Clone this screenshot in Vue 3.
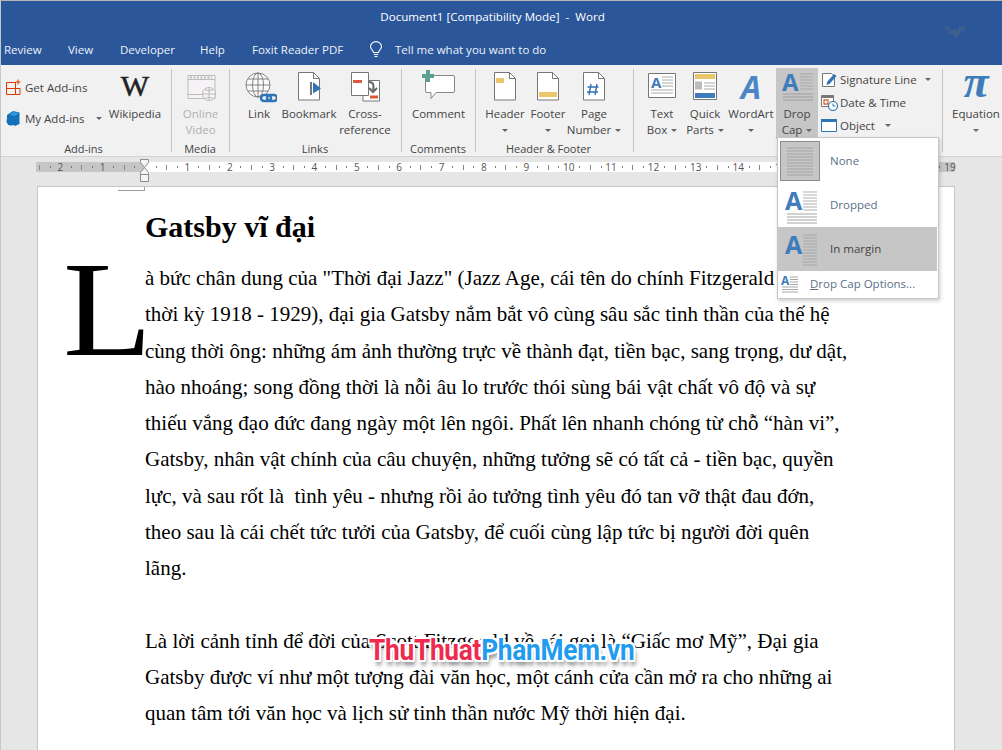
<script setup>
const tabs = [
  { t: 'Review', w: 64 }, { t: 'View', w: 52 }, { t: 'Developer', w: 80 },
  { t: 'Help', w: 52 }, { t: 'Foxit Reader PDF', w: 117 }
]
const rulerNums = []
for (let i = -2; i <= 19; i++) {
  if (i !== 0) rulerNums.push({ n: Math.abs(i), x: 145 + i * 42.37 })
}
const rulerMarks = []
for (let i = -3; i <= 19; i++) {
  const b = 145 + i * 42.37
  if (b + 10 > 36 && b + 10 < 950) rulerMarks.push({ x: b + 10.6, k: 'dot' })
  if (b + 21 > 36 && b + 21 < 950) rulerMarks.push({ x: b + 21.2, k: 'tick' })
  if (b + 32 > 36 && b + 32 < 950) rulerMarks.push({ x: b + 31.8, k: 'dot' })
}
const lines = [
  'à bức chân dung của "Thời đại Jazz" (Jazz Age, cái tên do chính Fitzgerald đặt cho',
  'thời kỳ 1918 - 1929), đại gia Gatsby nắm bắt vô cùng sâu sắc tinh thần của thế hệ',
  'cùng thời ông: những ám ảnh thường trực về thành đạt, tiền bạc, sang trọng, dư dật,',
  'hào nhoáng; song đồng thời là nỗi âu lo trước thói sùng bái vật chất vô độ và sự',
  'thiếu vắng đạo đức đang ngày một lên ngôi. Phất lên nhanh chóng từ chỗ “hàn vi”,',
  'Gatsby, nhân vật chính của câu chuyện, những tưởng sẽ có tất cả - tiền bạc, quyền',
  'lực, và sau rốt là  tình yêu - nhưng rồi ảo tưởng tình yêu đó tan vỡ thật đau đớn,',
  'theo sau là cái chết tức tưởi của Gatsby, để cuối cùng lập tức bị người đời quên',
  'lãng.',
  '\u00a0',
  'Là lời cảnh tỉnh để đời của Scott Fitzgerald về cái gọi là “Giấc mơ Mỹ”, Đại gia',
  'Gatsby được ví như một tượng đài văn học, một cánh cửa cần mở ra cho những ai',
  'quan tâm tới văn học và lịch sử tinh thần nước Mỹ thời hiện đại.'
]
</script>

<template>
  <div class="app">
    <header class="titlebar">
      <div class="title">Document1 [Compatibility Mode]&nbsp; -&nbsp; Word</div>
      <nav class="tabs">
        <span v-for="t in tabs" :key="t.t" class="tab" :style="{ width: t.w + 'px' }">{{ t.t }}</span>
        <svg class="bulb" width="14" height="17" viewBox="0 0 14 17" fill="none" stroke="#fff" stroke-width="1.1">
          <path d="M4.5 11.5C4 9 1.5 8.5 1.5 5.6a5.5 5 0 0 1 11 0C12.500 8.500 10 9 9.500 11.500Z" />
          <path d="M4.800 13.500h4.400M5.500 15.500h3" />
        </svg>
        <span class="tell">Tell me what you want to do</span>
      </nav>
      <svg class="smudge" width="28" height="24" viewBox="0 0 28 24" fill="#3d5f8f">
        <path d="M2 8l5 1 2 5 3-4 3 3 2-5 5 1 3-4-3 8-4 0-1 5-4 3-2-4-4-1-1-4-3-1Z" />
      </svg>
    </header>

    <section class="ribbon">
      <div class="group g-addins">
        <div class="group-body">
          <div class="addin-col">
            <div class="addin-row">
              <svg width="17" height="17" viewBox="0 0 17 17" fill="none" stroke="#d83b01" stroke-width="1">
                <path d="M1.500 3.500h9v12h-9ZM1.500 9.500h13.500v6h-4.500M10.500 3.500v12" />
                <path d="M13 .5v5M10.500 3h5" />
              </svg>
              <span>Get Add-ins</span>
            </div>
            <div class="addin-row">
              <svg width="17" height="17" viewBox="0 0 17 17">
                <path d="M8 1l6.500 1.500V14L10 16l-3-2V10L2 10 2 5Z" fill="#1570b8" />
                <circle cx="6" cy="11" r="4.500" fill="#1570b8" />
                <path d="M8 2l6 1-4 3-5-1Z" fill="#2e9ae0" />
              </svg>
              <span>My Add-ins</span>
              <i class="caret caret-addin"></i>
            </div>
          </div>
          <div class="btn w60">
            <div class="icon">
              <svg width="36" height="36" viewBox="0 0 36 36"><text x="18" y="27" text-anchor="middle" class="wiki">W</text></svg>
            </div>
            <div class="lbl">Wikipedia</div>
          </div>
        </div>
        <div class="group-name">Add-ins</div>
      </div>

      <div class="group g-media">
        <div class="group-body">
          <div class="btn w57 disabled">
            <div class="icon">
              <svg width="36" height="36" viewBox="0 0 36 36" fill="none" stroke="#bcbcbc">
                <path d="M5 6.500h27v23H5Z" fill="#f6f2f6" />
                <path d="M5 10.500h27M5 25.500h14" />
                <path d="M7 8.500h22" stroke-dasharray="2 1.500" stroke-width="2" />
                <circle cx="26" cy="25" r="6.500" fill="#f4f4f4" />
                <path d="M19.500 25h13M26 18.500v13M22 20.500c3 1.500 5 1.500 8 0M22 29.500c3-1.500 5-1.500 8 0" />
              </svg>
            </div>
            <div class="lbl">Online<br />Video</div>
          </div>
        </div>
        <div class="group-name">Media</div>
      </div>

      <div class="group g-links">
        <div class="group-body">
          <div class="btn w50">
            <div class="icon">
              <svg width="36" height="36" viewBox="0 0 36 36" fill="none" stroke="#777" stroke-width=".9">
                <circle cx="17" cy="16" r="12" fill="#fafafa" />
                <ellipse cx="17" cy="16" rx="5.500" ry="12" />
                <path d="M5 16h24M7 10h20M7 22h20M17 4v24" />
                <rect x="20" y="26" width="10" height="6" rx="3" stroke="#2e75b6" stroke-width="2.500" />
                <rect x="26" y="26" width="10" height="6" rx="3" stroke="#2e75b6" stroke-width="2.500" />
              </svg>
            </div>
            <div class="lbl">Link</div>
          </div>
          <div class="btn w50">
            <div class="icon">
              <svg width="36" height="36" viewBox="0 0 36 36" fill="none" stroke="#777">
                <path d="M7.500 3.500h15l6 6v21.500h-21Z" fill="#fff" />
                <path d="M22.500 3.500v6h6" />
                <path d="M19 13h2v13h-2Z" fill="#777" stroke="none" />
                <path d="M22 13l8 6.500-8 5Z" fill="#2e75b6" stroke="none" />
              </svg>
            </div>
            <div class="lbl">Bookmark</div>
          </div>
          <div class="btn w62">
            <div class="icon">
              <svg width="36" height="36" viewBox="0 0 36 36" fill="none" stroke="#777">
                <path d="M16 11.500h16.500v20.500H16Z" fill="#fff" />
                <path d="M4.500 3.500h17v23h-17Z" fill="#fff" />
                <path d="M6 11h9v3H6ZM23 26.500h8v3h-8Z" fill="#d9593a" stroke="none" />
                <path d="M22 13c5 0 5 4 4 8M22 19l4 4 4-4" stroke="#666" stroke-width="2" />
              </svg>
            </div>
            <div class="lbl">Cross-<br />reference</div>
          </div>
        </div>
        <div class="group-name">Links</div>
      </div>

      <div class="group g-comments">
        <div class="group-body">
          <div class="btn w73">
            <div class="icon">
              <svg width="36" height="36" viewBox="0 0 36 36" fill="none">
                <path d="M6 6.500h26a1.500 1.500 0 0 1 1.500 1.500v14a1.500 1.500 0 0 1-1.500 1.500H15l-5 6v-6H6a1.500 1.500 0 0 1-1.500-1.500V8A1.500 1.500 0 0 1 6 6.500Z" stroke="#888" fill="#fff" />
                <path d="M5 1h4v4h4v4H9v4H5V9H1V5h4Z" fill="#5ba18f" />
              </svg>
            </div>
            <div class="lbl">Comment</div>
          </div>
        </div>
        <div class="group-name">Comments</div>
      </div>

      <div class="group g-hf">
        <div class="group-body">
          <div class="btn w44">
            <div class="icon">
              <svg width="36" height="36" viewBox="0 0 36 36" fill="none" stroke="#777">
                <path d="M7.500 3.500h15l6 6v21.500h-21Z" fill="#fff" />
                <path d="M22.500 3.500v6h6" />
                <path d="M9 9h8v5H9Z" fill="#ecc66d" stroke="none" />
              </svg>
            </div>
            <div class="lbl">Header<br /><i class="caret"></i></div>
          </div>
          <div class="btn w42">
            <div class="icon">
              <svg width="36" height="36" viewBox="0 0 36 36" fill="none" stroke="#777">
                <path d="M7.500 3.500h15l6 6v21.500h-21Z" fill="#fff" />
                <path d="M22.500 3.500v6h6" />
                <path d="M9 23h18v5H9Z" fill="#ecc66d" stroke="none" />
              </svg>
            </div>
            <div class="lbl">Footer<br /><i class="caret"></i></div>
          </div>
          <div class="btn w50">
            <div class="icon">
              <svg width="36" height="36" viewBox="0 0 36 36" fill="none" stroke="#777">
                <path d="M7.500 3.500h15l6 6v21.500h-21Z" fill="#fff" />
                <path d="M22.500 3.500v6h6" />
                <path d="M15 15l-2 11M21 15l-2 11M11.500 18h11M11 23h11" stroke="#2e75b6" stroke-width="1.400" />
              </svg>
            </div>
            <div class="lbl">Page<br />Number<i class="caret inl"></i></div>
          </div>
        </div>
        <div class="group-name">Header &amp; Footer</div>
      </div>

      <div class="group g-text">
        <div class="group-body">
          <div class="btn w44">
            <div class="icon">
              <svg width="36" height="36" viewBox="0 0 36 36" fill="none">
                <path d="M4.500 4.500h27v24h-27Z" stroke="#777" fill="#fff" />
                <text x="7" y="19" class="ia">A</text>
                <path d="M18 8h11M18 11h11M18 14h11M18 17h11M7 21h22M7 24h22" stroke="#aaa" />
              </svg>
            </div>
            <div class="lbl">Text<br />Box<i class="caret inl"></i></div>
          </div>
          <div class="btn w42">
            <div class="icon">
              <svg width="36" height="36" viewBox="0 0 36 36" fill="none">
                <path d="M6.500 3.500h23v27h-23Z" stroke="#777" fill="#fff" />
                <path d="M8 5h20v5H8Z" fill="#ecc66d" />
                <path d="M8 12.500h7v8H8Z" fill="#bbb" />
                <path d="M17 14h11M17 17h11M17 20h11" stroke="#aaa" />
                <path d="M8 24h20v5H8Z" fill="#3f7cbc" />
              </svg>
            </div>
            <div class="lbl">Quick<br />Parts<i class="caret inl"></i></div>
          </div>
          <div class="btn w50">
            <div class="icon">
              <svg width="36" height="36" viewBox="0 0 36 36"><text x="18" y="30" text-anchor="middle" class="iart">A</text></svg>
            </div>
            <div class="lbl">WordArt<br /><i class="caret"></i></div>
          </div>
          <div class="btn w42 active">
            <div class="icon">
              <svg width="36" height="36" viewBox="0 0 36 36" fill="none">
                <text x="3" y="22" class="icap">A</text>
                <path d="M21 5h13M21 8h13M21 11h13M21 14h13M21 17h13M21 20h13" stroke="#a9a9a9" />
                <path d="M4 25h30M4 28h30M4 31h30" stroke="#a0a0a0" />
              </svg>
            </div>
            <div class="lbl">Drop<br />Cap<i class="caret inl"></i></div>
          </div>
          <div class="side-col">
            <div class="side-row">
              <svg width="17" height="17" viewBox="0 0 17 17" fill="none">
                <path d="M1.500 2.500h9l3 3v10h-12Z" stroke="#777" fill="#fff" />
                <path d="M6 11l7-8 2.500 2-7 8-3 1Z" fill="#2e75b6" />
              </svg>
              <span>Signature Line</span><i class="caret caret-sig"></i>
            </div>
            <div class="side-row">
              <svg width="17" height="17" viewBox="0 0 17 17" fill="none">
                <path d="M.5 1.500h12v11H.5Z" stroke="#777" fill="#fff" />
                <path d="M1 2h11v2H1Z" fill="#777" />
                <path d="M3 6h4v4H3Z" stroke="#d9663a" stroke-width="1.300" />
                <circle cx="12" cy="12" r="4.500" stroke="#2e75b6" stroke-width="1.200" fill="#fff" />
                <path d="M12 9.500V12h2.500" stroke="#2e75b6" />
              </svg>
              <span>Date &amp; Time</span>
            </div>
            <div class="side-row">
              <svg width="17" height="17" viewBox="0 0 17 17" fill="none">
                <path d="M.5 2.500h15v12H.5Z" stroke="#2e75b6" fill="#fff" />
                <path d="M0 2h16v3H0Z" fill="#2e75b6" />
              </svg>
              <span>Object</span><i class="caret caret-obj"></i>
            </div>
          </div>
        </div>
      </div>

      <div class="group g-eq">
        <div class="group-body">
          <div class="btn w60">
            <div class="icon">
              <svg width="36" height="36" viewBox="0 0 36 36"><text x="18" y="28" text-anchor="middle" class="ipi">π</text></svg>
            </div>
            <div class="lbl">Equation<br /><i class="caret"></i></div>
          </div>
        </div>
      </div>
    </section>

    <div class="ruler-zone">
      <div class="ruler">
        <div class="ruler-white"></div>
        <span v-for="m in rulerMarks" :key="m.x" :class="m.k" :style="{ left: m.x + 'px' }"></span>
        <span v-for="r in rulerNums" :key="r.x" class="rnum" :style="{ left: r.x + 'px' }">{{ r.n }}</span>
      </div>
      <svg class="indent" width="12" height="24" viewBox="0 0 12 24" fill="#f4f4f4" stroke="#8c8c8c">
        <path d="M1.500.5h8v3l-4 5-4-5ZM5.500 8.500l4 5v2h-8v-2ZM1.500 15.500h8v7h-8Z" />
      </svg>
    </div>

    <main class="page">
      <div class="crop"></div>
      <h1 class="doc-title">Gatsby vĩ đại</h1>
      <div class="big-l">L</div>
      <p v-for="(l, i) in lines" :key="i" class="line">{{ l }}</p>
    </main>

    <aside class="menu">
      <div class="menu-item">
        <div class="thumb thumb-none">
          <svg width="38" height="38" viewBox="0 0 38 38" fill="none" stroke="#a4a4a4">
            <path d="M6 6h26M6 9h26M6 12h26M6 15h26M6 18h26M6 21h26M6 24h26M6 27h26M6 30h26M6 33h26" />
          </svg>
        </div>
        <span class="menu-label">None</span>
      </div>
      <div class="menu-item">
        <div class="thumb">
          <svg width="38" height="38" viewBox="0 0 38 38" fill="none">
            <text x="4" y="24" class="mcap">A</text>
            <path d="M22 6h14M22 9h14M22 12h14M22 15h14M22 18h14M22 21h14M22 24h14" stroke="#b0b0b0" />
            <path d="M6 28h30M6 31h30M6 34h30M6 37h30" stroke="#a4a4a4" />
          </svg>
        </div>
        <span class="menu-label">Dropped</span>
      </div>
      <div class="menu-item hl">
        <div class="thumb">
          <svg width="38" height="38" viewBox="0 0 38 38" fill="none">
            <text x="4" y="24" class="mcap">A</text>
            <path d="M22 5h14M22 8h14M22 11h14M22 14h14M22 17h14M22 20h14M22 23h14M22 26h14M22 29h14M22 32h14M22 35h14" stroke="#a8a8a8" />
          </svg>
        </div>
        <span class="menu-label dark">In margin</span>
      </div>
      <div class="menu-opt">
        <svg width="18" height="18" viewBox="0 0 18 18" fill="none">
          <text x="0" y="10" class="optcap">A</text>
          <path d="M9 2h8M9 4.500h8M9 7h8M9 9.500h8M1 12h16M1 14.500h16M1 17h16" stroke="#a8a8a8" />
        </svg>
        <span class="opt-label"><u>D</u>rop Cap Options...</span>
      </div>
    </aside>

    <div class="watermark"><span class="wm-red">ThuThuat</span><span class="wm-blue">PhanMem.vn</span></div>
  </div>
</template>

<style>
html, body { margin: 0; padding: 0; background: #e6e6e6; }
</style>

<style scoped>
.app {
  position: relative;
  width: 1002px;
  height: 750px;
  overflow: hidden;
  background: #e6e6e6;
  font-family: "Open Sans", "Noto Sans", sans-serif;
  font-size: 11.5px;
  color: #444;
}
.app::after {
  content: "";
  position: absolute;
  inset: 0;
  border-top: 1px solid #b4b4b4;
  border-left: 1px solid #c8c8c8;
  pointer-events: none;
}
.titlebar {
  position: relative;
  height: 65px;
  background: #2b579a;
  color: #fff;
}
.title {
  height: 33px;
  line-height: 33px;
  text-align: center;
  padding-right: 17px;
  font-size: 11.6px;
}
.tabs {
  display: flex;
  align-items: center;
  height: 32px;
  padding-left: 4px;
  color: #eef2f8;
}
.tab { display: block; white-space: nowrap; }
.bulb { margin-right: 12px; }
.tell { white-space: nowrap; }
.smudge { position: absolute; left: 942px; top: 18px; }

.ribbon {
  display: flex;
  height: 92px;
  background: #f1f1f1;
  border-bottom: 1px solid #d2d2d2;
  box-sizing: border-box;
}
.group {
  position: relative;
  display: flex;
  flex-direction: column;
  flex: none;
  box-sizing: border-box;
}
.group::after {
  content: "";
  position: absolute;
  right: 0;
  top: 4px;
  bottom: 4px;
  width: 1px;
  background: #c6c6c6;
}
.g-addins { width: 172px; padding-left: 5px; }
.g-media { width: 58px; }
.g-links { width: 172px; padding-left: 4px; }
.g-comments { width: 74px; }
.g-hf { width: 158px; padding-left: 7px; }
.g-text { width: 309px; padding-left: 6px; }
.g-eq { width: 60px; padding-left: 3px; }
.g-eq::after { display: none; }
.group-body { display: flex; flex: 1; }
.group-name {
  height: 16px;
  box-sizing: border-box;
  padding-top: 2px;
  line-height: 14px;
  text-align: center;
  font-size: 11px;
  white-space: nowrap;
  padding-right: 2px;
}
.g-addins .group-name { padding-right: 10px; }
.g-links .group-name { padding-right: 6px; }
.g-hf .group-name { padding-right: 20px; }
.btn {
  flex: none;
  display: flex;
  flex-direction: column;
  align-items: center;
  padding-top: 4px;
  box-sizing: border-box;
  white-space: nowrap;
}
.w42 { width: 42px; }
.w44 { width: 44px; }
.w50 { width: 50px; }
.w57 { width: 57px; }
.w60 { width: 60px; }
.w62 { width: 62px; }
.w73 { width: 73px; }
.icon { height: 36.5px; display: flex; justify-content: center; }
.lbl { line-height: 16px; text-align: center; }
.disabled { color: #b0b0b0; }
.active { background: #c6c6c6; margin-top: 3px; padding-top: 1px; height: 71px; }
.g-text .group-body { align-items: flex-start; }

.caret {
  display: inline-block;
  width: 0;
  height: 0;
  border-left: 3px solid transparent;
  border-right: 3px solid transparent;
  border-top: 3px solid #666;
  vertical-align: middle;
}
.inl { margin-left: 4px; }
.addin-col { width: 100px; padding-top: 7px; }
.addin-row { display: flex; align-items: center; gap: 3px; height: 31px; white-space: nowrap; }
.caret-addin { margin-left: 8px; }
.side-col { width: 120px; padding: 3px 0 0 3px; box-sizing: border-box; }
.side-row { display: flex; align-items: center; gap: 2px; height: 23px; white-space: nowrap; }
.caret-sig { margin-left: 6px; }
.caret-obj { margin-left: 8px; }

.wiki { font: 400 30px "Liberation Serif", serif; fill: #222; stroke: #222; stroke-width: .5px; }
.ia { font: 700 15px "Open Sans", sans-serif; fill: #3f7cbc; }
.iart { font: italic 700 32px "Open Sans", sans-serif; fill: #4a86c5; }
.icap { font: 700 24px "Open Sans", sans-serif; fill: #3f7cbc; }
.ipi { font: italic 700 46px "Liberation Serif", serif; fill: #3f7cbc; }
.mcap { font: 700 25px "Open Sans", sans-serif; fill: #3f7cbc; }
.optcap { font: 700 12px "Open Sans", sans-serif; fill: #3f7cbc; }

.ruler-zone { position: relative; height: 29px; }
.ruler {
  position: absolute;
  left: 0;
  top: 5px;
  width: 955px;
  height: 10px;
}
.ruler::before {
  content: "";
  position: absolute;
  left: 36px;
  right: 0;
  top: 0;
  bottom: 0;
  background: #c6c6c6;
}
.ruler-white {
  position: absolute;
  left: 145px;
  width: 707px;
  top: 0;
  bottom: 0;
  background: #fff;
}
.dot { position: absolute; top: 4px; width: 1px; height: 2px; background: #777; }
.tick { position: absolute; top: 3px; width: 1px; height: 5px; background: #888; }
.rnum {
  position: absolute;
  top: -2px;
  width: 20px;
  margin-left: -10px;
  text-align: center;
  font-size: 10px;
  line-height: 14px;
  color: #555;
}
.indent { position: absolute; left: 139px; top: 2px; }

.page {
  position: relative;
  width: 918px;
  height: 600px;
  margin-left: 37px;
  padding: 22px 0 0 107px;
  box-sizing: border-box;
  background: #fff;
  border: 1px solid #c6c6c6;
  border-bottom: 0;
  font-family: "Liberation Serif", "Times New Roman", serif;
  font-size: 21px;
  color: #000;
}
.crop {
  position: absolute;
  left: 80px;
  top: 0;
  width: 26px;
  height: 3px;
  border-right: 1px solid #9c9c9c;
  border-bottom: 1px solid #9c9c9c;
}
.doc-title {
  margin: 0 0 15px;
  font-size: 30px;
  line-height: 36px;
  font-weight: 700;
}
.line {
  margin: 0;
  line-height: 36.25px;
  white-space: pre;
}
.big-l {
  position: absolute;
  left: 25px;
  top: 48px;
  font-size: 135px;
  line-height: 150px;
  transform: scaleX(1.08);
  transform-origin: left center;
}

.menu {
  position: absolute;
  left: 777px;
  top: 137px;
  width: 162px;
  height: 162px;
  padding-top: 1px;
  box-sizing: border-box;
  background: #fff;
  border: 1px solid #c6c6c6;
  box-shadow: 1px 2px 4px rgba(0, 0, 0, .2);
}
.menu-item {
  display: flex;
  align-items: center;
  height: 44px;
  margin-right: 1px;
  padding-left: 2px;
}
.hl { background: #c6c6c6; }
.thumb {
  flex: none;
  width: 40px;
  height: 40px;
  box-sizing: border-box;
  display: flex;
  align-items: center;
  justify-content: center;
}
.thumb-none { background: #c6c6c6; border: 1px solid #8c8c8c; }
.menu-label { margin: 0 0 2px 10px; color: #5c6f88; }
.menu-label.dark { color: #444; }
.menu-opt {
  display: flex;
  align-items: center;
  height: 26px;
  padding-left: 3px;
  gap: 11px;
}
.opt-label { color: #5c6f88; white-space: nowrap; margin-bottom: 1px; }

.watermark {
  position: absolute;
  left: 369px;
  top: 630px;
  font-family: Roboto, "Open Sans", sans-serif;
  font-size: 30px;
  font-weight: 700;
  letter-spacing: -.3px;
  line-height: 40px;
  white-space: nowrap;
  transform: scaleX(.875);
  transform-origin: left center;
  text-shadow:
    -2px -2px 0 #fff, 2px -2px 0 #fff, -2px 2px 0 #fff, 2px 2px 0 #fff,
    0 -2px 0 #fff, 0 2px 0 #fff, -2px 0 0 #fff, 2px 0 0 #fff,
    2px 5px 5px rgba(0, 0, 0, .55);
}
.wm-red { color: #ee2a4f; }
.wm-blue { color: #1f9bf0; }
</style>
